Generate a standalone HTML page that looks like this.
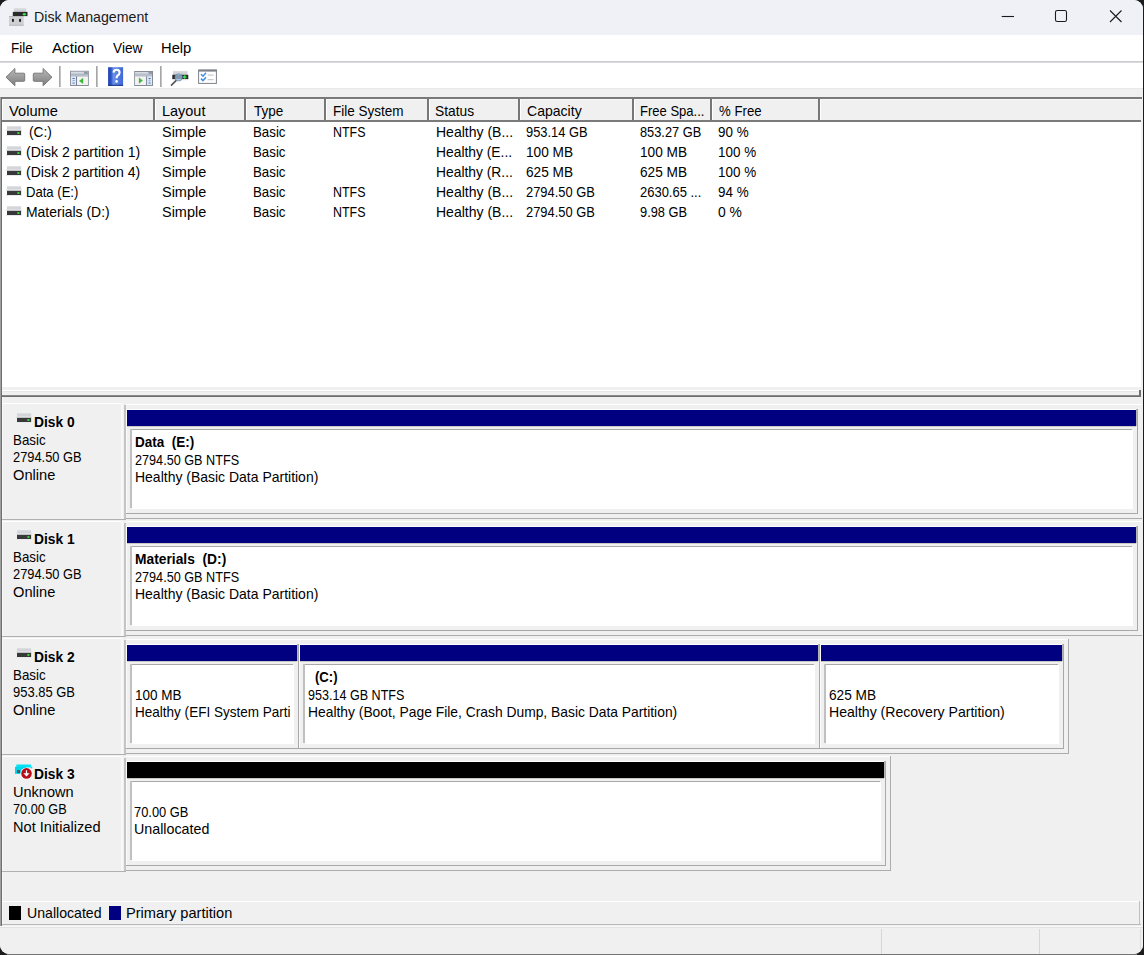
<!DOCTYPE html>
<html><head><meta charset="utf-8"><title>Disk Management</title>
<style>
html,body{margin:0;padding:0;}
body{width:1144px;height:955px;background:#1c1c1c;overflow:hidden;position:relative;font-family:"Liberation Sans",sans-serif;}
#win{position:absolute;left:0;top:0;width:1143px;height:954px;border-radius:9px;overflow:hidden;background:#f0f0f0;}
#win div, #win svg{position:absolute;}
.t{position:absolute;font-size:15px;line-height:20px;white-space:pre;transform-origin:0 15px;}
</style></head><body><div id="win">
<div style="left:0px;top:0px;width:1143px;height:35px;background:#eff1f6;"></div><div style="left:0px;top:35px;width:1143px;height:26px;background:#fff;"></div><div style="left:0px;top:62px;width:1143px;height:26px;background:#fff;"></div><div style="left:0px;top:88px;width:1143px;height:9px;background:#f0f0f0;"></div><div style="left:0px;top:88px;width:1143px;height:1px;background:#e8e8e8;"></div><div style="left:0px;top:61px;width:1143px;height:1px;background:#cbcbcb;"></div><div style="left:0px;top:62px;width:1143px;height:1px;background:#dadce2;"></div><div style="left:59px;top:66px;width:1px;height:21px;background:#a6a6a6;"></div><div style="left:60px;top:66px;width:1px;height:21px;background:#c4c4c4;"></div><div style="left:96px;top:66px;width:1px;height:21px;background:#a6a6a6;"></div><div style="left:97px;top:66px;width:1px;height:21px;background:#c4c4c4;"></div><div style="left:160px;top:66px;width:1px;height:21px;background:#a6a6a6;"></div><div style="left:161px;top:66px;width:1px;height:21px;background:#c4c4c4;"></div><div style="left:0px;top:97px;width:1143px;height:300px;background:#f0f0f0;"></div><div style="left:0px;top:97px;width:1142px;height:2px;background:#7a7a7a;"></div><div style="left:0px;top:97px;width:1px;height:829px;background:#a0a0a0;"></div><div style="left:1px;top:97px;width:1px;height:829px;background:#6e6e6e;"></div><div style="left:2px;top:99px;width:1139px;height:21px;background:#f0f0f0;"></div><div style="left:2px;top:99px;width:1139px;height:1px;background:#f8f8f8;"></div><div style="left:2px;top:120px;width:1139px;height:2px;background:#7a7a7a;"></div><div style="left:153px;top:99px;width:2px;height:21px;background:#777;"></div><div style="left:155px;top:100px;width:1px;height:20px;background:#fff;"></div><div style="left:244px;top:99px;width:2px;height:21px;background:#777;"></div><div style="left:246px;top:100px;width:1px;height:20px;background:#fff;"></div><div style="left:324px;top:99px;width:2px;height:21px;background:#777;"></div><div style="left:326px;top:100px;width:1px;height:20px;background:#fff;"></div><div style="left:427px;top:99px;width:2px;height:21px;background:#777;"></div><div style="left:429px;top:100px;width:1px;height:20px;background:#fff;"></div><div style="left:518px;top:99px;width:2px;height:21px;background:#777;"></div><div style="left:520px;top:100px;width:1px;height:20px;background:#fff;"></div><div style="left:632px;top:99px;width:2px;height:21px;background:#777;"></div><div style="left:634px;top:100px;width:1px;height:20px;background:#fff;"></div><div style="left:710px;top:99px;width:2px;height:21px;background:#777;"></div><div style="left:712px;top:100px;width:1px;height:20px;background:#fff;"></div><div style="left:818px;top:99px;width:2px;height:21px;background:#777;"></div><div style="left:820px;top:100px;width:1px;height:20px;background:#fff;"></div><div style="left:2px;top:100px;width:1px;height:20px;background:#fff;"></div><div style="left:2px;top:122px;width:1139px;height:265px;background:#fff;"></div><div style="left:2px;top:387px;width:1139px;height:8px;background:#f0f0f0;"></div><div style="left:2px;top:390px;width:1137px;height:1px;background:#ffffff;"></div><div style="left:3px;top:391px;width:1136px;height:1px;background:#e6e6e6;"></div><div style="left:2px;top:395px;width:1139px;height:1px;background:#8a8a8a;"></div><div style="left:2px;top:396px;width:1139px;height:1px;background:#6c6c6c;"></div><div style="left:3px;top:397px;width:1138px;height:1px;background:#f6f6f6;"></div><div style="left:1139px;top:390px;width:2px;height:7px;background:#6f6f6f;"></div><div style="left:2px;top:397px;width:1139px;height:528px;background:#f0f0f0;"></div><div style="left:2px;top:397px;width:1px;height:528px;background:#f8f8f8;"></div><div style="left:3px;top:403px;width:120px;height:1px;background:#fff;"></div><div style="left:121px;top:403px;width:2px;height:116px;background:#f8f8f8;"></div><div style="left:124px;top:405px;width:2px;height:114px;background:#c4c4c4;"></div><div style="left:2px;top:519px;width:124px;height:1px;background:#b0b0b0;"></div><div style="left:126px;top:404px;width:1016px;height:1px;background:#fff;"></div><div style="left:126px;top:518px;width:1016px;height:1px;background:#acacac;"></div><div style="left:126px;top:409px;width:1011px;height:1px;background:#fff;"></div><div style="left:126px;top:409px;width:1px;height:104px;background:#fbfbfb;"></div><div style="left:127px;top:410px;width:1009px;height:16px;background:#000080;"></div><div style="left:1137px;top:409px;width:1px;height:105px;background:#a8a8a8;"></div><div style="left:1136px;top:409px;width:1px;height:17px;background:#b4b4b4;"></div><div style="left:126px;top:513px;width:1012px;height:1px;background:#a8a8a8;"></div><div style="left:127px;top:426px;width:1009px;height:1px;background:#c8c8c0;"></div><div style="left:132px;top:430px;width:1001px;height:79px;background:#fff;"></div><div style="left:130px;top:429px;width:1002px;height:1px;background:#a8a8a8;"></div><div style="left:130px;top:429px;width:2px;height:79px;background:#c0c0c0;"></div><div style="left:3px;top:521px;width:120px;height:1px;background:#fff;"></div><div style="left:121px;top:521px;width:2px;height:115px;background:#f8f8f8;"></div><div style="left:124px;top:523px;width:2px;height:113px;background:#c4c4c4;"></div><div style="left:2px;top:636px;width:124px;height:1px;background:#b0b0b0;"></div><div style="left:126px;top:521px;width:1016px;height:1px;background:#fff;"></div><div style="left:126px;top:635px;width:1016px;height:1px;background:#acacac;"></div><div style="left:126px;top:526px;width:1011px;height:1px;background:#fff;"></div><div style="left:126px;top:526px;width:1px;height:104px;background:#fbfbfb;"></div><div style="left:127px;top:527px;width:1009px;height:16px;background:#000080;"></div><div style="left:1137px;top:526px;width:1px;height:105px;background:#a8a8a8;"></div><div style="left:1136px;top:526px;width:1px;height:17px;background:#b4b4b4;"></div><div style="left:126px;top:630px;width:1012px;height:1px;background:#a8a8a8;"></div><div style="left:127px;top:543px;width:1009px;height:1px;background:#c8c8c0;"></div><div style="left:132px;top:547px;width:1001px;height:79px;background:#fff;"></div><div style="left:130px;top:546px;width:1002px;height:1px;background:#a8a8a8;"></div><div style="left:130px;top:546px;width:2px;height:79px;background:#c0c0c0;"></div><div style="left:3px;top:638px;width:120px;height:1px;background:#fff;"></div><div style="left:121px;top:638px;width:2px;height:116px;background:#f8f8f8;"></div><div style="left:124px;top:640px;width:2px;height:114px;background:#c4c4c4;"></div><div style="left:2px;top:754px;width:124px;height:1px;background:#b0b0b0;"></div><div style="left:126px;top:639px;width:943px;height:1px;background:#fff;"></div><div style="left:1068px;top:639px;width:1px;height:115px;background:#acacac;"></div><div style="left:126px;top:753px;width:943px;height:1px;background:#acacac;"></div><div style="left:126px;top:644px;width:172px;height:1px;background:#fff;"></div><div style="left:126px;top:644px;width:1px;height:104px;background:#fbfbfb;"></div><div style="left:127px;top:645px;width:170px;height:16px;background:#000080;"></div><div style="left:298px;top:644px;width:1px;height:105px;background:#a8a8a8;"></div><div style="left:297px;top:644px;width:1px;height:17px;background:#b4b4b4;"></div><div style="left:126px;top:748px;width:173px;height:1px;background:#a8a8a8;"></div><div style="left:127px;top:661px;width:170px;height:1px;background:#c8c8c0;"></div><div style="left:132px;top:665px;width:162px;height:79px;background:#fff;"></div><div style="left:130px;top:664px;width:163px;height:1px;background:#a8a8a8;"></div><div style="left:130px;top:664px;width:2px;height:79px;background:#c0c0c0;"></div><div style="left:299px;top:644px;width:520px;height:1px;background:#fff;"></div><div style="left:299px;top:644px;width:1px;height:104px;background:#fbfbfb;"></div><div style="left:300px;top:645px;width:518px;height:16px;background:#000080;"></div><div style="left:819px;top:644px;width:1px;height:105px;background:#a8a8a8;"></div><div style="left:818px;top:644px;width:1px;height:17px;background:#b4b4b4;"></div><div style="left:299px;top:748px;width:521px;height:1px;background:#a8a8a8;"></div><div style="left:300px;top:661px;width:518px;height:1px;background:#c8c8c0;"></div><div style="left:305px;top:665px;width:510px;height:79px;background:#fff;"></div><div style="left:303px;top:664px;width:511px;height:1px;background:#a8a8a8;"></div><div style="left:303px;top:664px;width:2px;height:79px;background:#c0c0c0;"></div><div style="left:820px;top:644px;width:243px;height:1px;background:#fff;"></div><div style="left:820px;top:644px;width:1px;height:104px;background:#fbfbfb;"></div><div style="left:821px;top:645px;width:241px;height:16px;background:#000080;"></div><div style="left:1063px;top:644px;width:1px;height:105px;background:#a8a8a8;"></div><div style="left:1062px;top:644px;width:1px;height:17px;background:#b4b4b4;"></div><div style="left:820px;top:748px;width:244px;height:1px;background:#a8a8a8;"></div><div style="left:821px;top:661px;width:241px;height:1px;background:#c8c8c0;"></div><div style="left:826px;top:665px;width:233px;height:79px;background:#fff;"></div><div style="left:824px;top:664px;width:234px;height:1px;background:#a8a8a8;"></div><div style="left:824px;top:664px;width:2px;height:79px;background:#c0c0c0;"></div><div style="left:3px;top:756px;width:120px;height:1px;background:#fff;"></div><div style="left:121px;top:756px;width:2px;height:115px;background:#f8f8f8;"></div><div style="left:124px;top:758px;width:2px;height:113px;background:#c4c4c4;"></div><div style="left:2px;top:871px;width:124px;height:1px;background:#b0b0b0;"></div><div style="left:126px;top:756px;width:765px;height:1px;background:#fff;"></div><div style="left:890px;top:756px;width:1px;height:115px;background:#acacac;"></div><div style="left:126px;top:870px;width:765px;height:1px;background:#acacac;"></div><div style="left:126px;top:761px;width:759px;height:1px;background:#fff;"></div><div style="left:126px;top:761px;width:1px;height:104px;background:#fbfbfb;"></div><div style="left:127px;top:762px;width:757px;height:16px;background:#000;"></div><div style="left:885px;top:761px;width:1px;height:105px;background:#a8a8a8;"></div><div style="left:884px;top:761px;width:1px;height:17px;background:#b4b4b4;"></div><div style="left:126px;top:865px;width:760px;height:1px;background:#a8a8a8;"></div><div style="left:127px;top:778px;width:757px;height:1px;background:#c8c8c0;"></div><div style="left:132px;top:782px;width:749px;height:79px;background:#fff;"></div><div style="left:130px;top:781px;width:750px;height:1px;background:#a8a8a8;"></div><div style="left:130px;top:781px;width:2px;height:79px;background:#c0c0c0;"></div><div style="left:2px;top:901px;width:1139px;height:1px;background:#fff;"></div><div style="left:2px;top:924px;width:1139px;height:1px;background:#b9b9b9;"></div><div style="left:1139px;top:901px;width:1px;height:24px;background:#c0c0c0;"></div><div style="left:9px;top:906px;width:12px;height:14px;background:#000;"></div><div style="left:109px;top:906px;width:12px;height:14px;background:#000080;"></div><div style="left:0px;top:926px;width:1143px;height:28px;background:#f0f0f0;"></div><div style="left:0px;top:926px;width:1143px;height:1px;background:#fafafa;"></div><div style="left:0px;top:927px;width:1143px;height:1px;background:#e2e2e2;"></div><div style="left:1140px;top:929px;width:1px;height:22px;background:#dedede;"></div><div style="left:881px;top:929px;width:1px;height:25px;background:#d6d6d6;"></div><div style="left:1039px;top:929px;width:1px;height:25px;background:#d6d6d6;"></div>
<svg style="left:6px;top:126px" width="17" height="11" viewBox="0 0 17 11"><rect x="1" y="0.3" width="14.1" height="3.5" fill="#d3d5d9"/><rect x="0" y="3.5" width="16" height="1.3" fill="#e1e3e7"/><rect x="1" y="4.8" width="14.1" height="4.2" fill="#383838"/><ellipse cx="12.4" cy="7" rx="1.3" ry="1.1" fill="#3ed83e"/><rect x="0" y="9" width="16" height="0.9" fill="#e6e8ec"/></svg><svg style="left:6px;top:146px" width="17" height="11" viewBox="0 0 17 11"><rect x="1" y="0.3" width="14.1" height="3.5" fill="#d3d5d9"/><rect x="0" y="3.5" width="16" height="1.3" fill="#e1e3e7"/><rect x="1" y="4.8" width="14.1" height="4.2" fill="#383838"/><ellipse cx="12.4" cy="7" rx="1.3" ry="1.1" fill="#3ed83e"/><rect x="0" y="9" width="16" height="0.9" fill="#e6e8ec"/></svg><svg style="left:6px;top:166px" width="17" height="11" viewBox="0 0 17 11"><rect x="1" y="0.3" width="14.1" height="3.5" fill="#d3d5d9"/><rect x="0" y="3.5" width="16" height="1.3" fill="#e1e3e7"/><rect x="1" y="4.8" width="14.1" height="4.2" fill="#383838"/><ellipse cx="12.4" cy="7" rx="1.3" ry="1.1" fill="#3ed83e"/><rect x="0" y="9" width="16" height="0.9" fill="#e6e8ec"/></svg><svg style="left:6px;top:186px" width="17" height="11" viewBox="0 0 17 11"><rect x="1" y="0.3" width="14.1" height="3.5" fill="#d3d5d9"/><rect x="0" y="3.5" width="16" height="1.3" fill="#e1e3e7"/><rect x="1" y="4.8" width="14.1" height="4.2" fill="#383838"/><ellipse cx="12.4" cy="7" rx="1.3" ry="1.1" fill="#3ed83e"/><rect x="0" y="9" width="16" height="0.9" fill="#e6e8ec"/></svg><svg style="left:6px;top:206px" width="17" height="11" viewBox="0 0 17 11"><rect x="1" y="0.3" width="14.1" height="3.5" fill="#d3d5d9"/><rect x="0" y="3.5" width="16" height="1.3" fill="#e1e3e7"/><rect x="1" y="4.8" width="14.1" height="4.2" fill="#383838"/><ellipse cx="12.4" cy="7" rx="1.3" ry="1.1" fill="#3ed83e"/><rect x="0" y="9" width="16" height="0.9" fill="#e6e8ec"/></svg><svg style="left:15.5px;top:413px" width="17" height="11" viewBox="0 0 17 11"><rect x="1" y="0.3" width="14.1" height="3.5" fill="#d3d5d9"/><rect x="0" y="3.5" width="16" height="1.3" fill="#e1e3e7"/><rect x="1" y="4.8" width="14.1" height="4.2" fill="#383838"/><ellipse cx="12.4" cy="7" rx="1.3" ry="1.1" fill="#3ed83e"/><rect x="0" y="9" width="16" height="0.9" fill="#e6e8ec"/></svg><svg style="left:15.5px;top:530px" width="17" height="11" viewBox="0 0 17 11"><rect x="1" y="0.3" width="14.1" height="3.5" fill="#d3d5d9"/><rect x="0" y="3.5" width="16" height="1.3" fill="#e1e3e7"/><rect x="1" y="4.8" width="14.1" height="4.2" fill="#383838"/><ellipse cx="12.4" cy="7" rx="1.3" ry="1.1" fill="#3ed83e"/><rect x="0" y="9" width="16" height="0.9" fill="#e6e8ec"/></svg><svg style="left:15.5px;top:648px" width="17" height="11" viewBox="0 0 17 11"><rect x="1" y="0.3" width="14.1" height="3.5" fill="#d3d5d9"/><rect x="0" y="3.5" width="16" height="1.3" fill="#e1e3e7"/><rect x="1" y="4.8" width="14.1" height="4.2" fill="#383838"/><ellipse cx="12.4" cy="7" rx="1.3" ry="1.1" fill="#3ed83e"/><rect x="0" y="9" width="16" height="0.9" fill="#e6e8ec"/></svg><svg style="left:10px;top:760px" width="30" height="24" viewBox="10 760 30 24"><rect x="16.3" y="764.5" width="14.7" height="3" fill="#00e4f8"/><rect x="15" y="766.8" width="12" height="7.1" fill="#00d4ea"/><rect x="17" y="770" width="3" height="3" fill="#555"/><circle cx="31.5" cy="767.5" r="0.9" fill="#00e4f8"/><circle cx="26.5" cy="773.4" r="6" fill="#fff"/><circle cx="26.5" cy="773.4" r="5.3" fill="#b80c1a"/><path d="M26.5 770.3 V773.8" stroke="#fff" stroke-width="1.3"/><path d="M23.4 773.2 H29.6 L26.5 776.6 Z" fill="#fff"/></svg>
<svg style="left:0;top:0" width="240" height="92" viewBox="0 0 240 92">
<defs>
<linearGradient id="ag" x1="0" y1="0" x2="0" y2="1"><stop offset="0" stop-color="#b9b9b9"/><stop offset="1" stop-color="#7d7d7d"/></linearGradient>
<linearGradient id="hb" x1="0" y1="0" x2="1" y2="0"><stop offset="0" stop-color="#1d3fae"/><stop offset="0.2" stop-color="#2b55c9"/><stop offset="0.35" stop-color="#6a90e6"/><stop offset="1" stop-color="#3d67d6"/></linearGradient>
<linearGradient id="dl" x1="0" y1="0" x2="0" y2="1"><stop offset="0" stop-color="#dcdee2"/><stop offset="1" stop-color="#c6c8cc"/></linearGradient>
</defs>
<!-- title icon -->
<rect x="13.9" y="8.1" width="12.3" height="4" fill="url(#dl)"/>
<rect x="12.8" y="11.9" width="14.7" height="4.2" fill="#2a2a2a"/>
<ellipse cx="24.3" cy="14.2" rx="1.6" ry="1.2" fill="#3ee04a"/>
<rect x="9" y="16" width="14.7" height="9.8" fill="#cfd0d4"/>
<rect x="9" y="16" width="14.7" height="1" fill="#b8b9bd"/>
<rect x="12" y="18.7" width="1.9" height="3.3" rx="0.8" fill="#1e1e1e"/>
<rect x="19.1" y="18.7" width="1.9" height="3.3" rx="0.8" fill="#1e1e1e"/>
<rect x="9" y="24.6" width="14.7" height="1.2" fill="#bdbec2"/>
<!-- back arrow -->
<path d="M6 77.2 L14.9 68.5 L14.9 73.2 L23.8 73.2 Q24.7 73.2 24.7 74.1 L24.7 80.4 Q24.7 81.3 23.8 81.3 L14.9 81.3 L14.9 85.8 Z" fill="url(#ag)" stroke="#7a7a7a" stroke-width="1"/>
<!-- forward arrow -->
<path d="M52 77.2 L43.1 68.5 L43.1 73.2 L34.2 73.2 Q33.3 73.2 33.3 74.1 L33.3 80.4 Q33.3 81.3 34.2 81.3 L43.1 81.3 L43.1 85.8 Z" fill="url(#ag)" stroke="#7a7a7a" stroke-width="1"/>
<!-- console tree icon -->
<rect x="70.6" y="71.3" width="17.7" height="14.2" fill="#edeff2" stroke="#868c96" stroke-width="1"/>
<rect x="71.1" y="71.8" width="16.7" height="2" fill="#d6dce4"/>
<rect x="84" y="71.8" width="3.8" height="2" fill="#8f98a8"/>
<rect x="71.1" y="73.8" width="16.7" height="0.8" fill="#7a8498"/>
<rect x="71.1" y="74.6" width="16.7" height="2.2" fill="#b9c0cc"/>
<rect x="71.1" y="76.8" width="5" height="8.2" fill="#e4e8ee"/>
<rect x="76.1" y="76.4" width="1" height="8.6" fill="#6a7590"/>
<rect x="77.1" y="76.8" width="10.7" height="8.2" fill="#f3f3f3"/>
<ellipse cx="73.6" cy="78.5" rx="1.5" ry="0.6" fill="#3a7ad0"/>
<ellipse cx="73.6" cy="80.6" rx="1.5" ry="0.6" fill="#8ab0e0"/>
<ellipse cx="73.6" cy="83" rx="1.5" ry="0.6" fill="#3a7ad0"/>
<path d="M79 80.9 L83.2 77.8 L83.2 84 Z" fill="#3fb83a"/>
<!-- help icon -->
<rect x="108.1" y="67.2" width="15" height="18.6" fill="url(#hb)"/>
<rect x="108.1" y="84.8" width="15" height="1" fill="#16307a"/>
<path d="M113.6 72.6 Q113.8 69.8 116.6 69.8 Q119.6 69.8 119.6 72.6 Q119.6 74.4 117.6 75.6 Q116.6 76.3 116.6 78.2" stroke="#fff" stroke-width="2.1" fill="none"/>
<circle cx="116.6" cy="81.4" r="1.3" fill="#fff"/>
<!-- action pane icon -->
<rect x="134.7" y="71.5" width="17.8" height="14" fill="#edeff2" stroke="#868c96" stroke-width="1"/>
<rect x="135.2" y="72" width="16.8" height="1.8" fill="#d6dce4"/>
<rect x="148.5" y="72" width="3.5" height="1.8" fill="#8f98a8"/>
<rect x="135.2" y="73.8" width="16.8" height="0.7" fill="#7a8498"/>
<rect x="135.2" y="74.5" width="16.8" height="2.2" fill="#b9c0cc"/>
<rect x="135.2" y="76.7" width="11" height="8.3" fill="#f3f3f3"/>
<rect x="146.2" y="76.4" width="1" height="8.6" fill="#6a7590"/>
<rect x="147.2" y="76.7" width="4.8" height="8.3" fill="#e4e8ee"/>
<path d="M138.9 77.6 L142.8 80.6 L138.9 83.8 Z" fill="#3fb83a"/>
<ellipse cx="149.6" cy="78.6" rx="1.4" ry="0.6" fill="#3a7ad0"/>
<ellipse cx="149.6" cy="80.8" rx="1.4" ry="0.6" fill="#8ab0e0"/>
<ellipse cx="149.6" cy="83" rx="1.4" ry="0.6" fill="#3a7ad0"/>
<!-- rescan icon -->
<rect x="173" y="70.9" width="14.5" height="4" fill="url(#dl)"/>
<rect x="172.3" y="74.8" width="16" height="4.4" fill="#2c2c2c"/>
<rect x="172.3" y="79.2" width="16" height="1" fill="#e0e2e6"/>
<path d="M182.8 77 h3.6 M184.6 75.2 v3.6" stroke="#3ee04a" stroke-width="1.4"/>
<circle cx="178.6" cy="77.4" r="3.6" fill="#9cc0e0" fill-opacity="0.75" stroke="#6f8fb0" stroke-width="0.8"/>
<path d="M176.3 80.4 L171 85.6" stroke="#555" stroke-width="1.6"/>
<!-- properties icon -->
<rect x="198.6" y="70.1" width="17.8" height="13.3" fill="#fff" stroke="#7e8288" stroke-width="1"/>
<rect x="198.6" y="69.6" width="18.3" height="2" fill="#7e8288"/>
<path d="M201 74.2 L203 76.2 L206 72.8" stroke="#3e8ee6" stroke-width="1.5" fill="none"/>
<path d="M201 78.6 L203 80.6 L206 77.2" stroke="#3e8ee6" stroke-width="1.5" fill="none"/>
<rect x="207.6" y="74.6" width="6" height="1" fill="#bdbdbd"/>
<rect x="207.6" y="79.2" width="6" height="1" fill="#bdbdbd"/>
<!-- caption buttons -->
<path d="M1001.5 16.5 h12.5" stroke="#1a1a1a" stroke-width="1"/>
</svg>
<svg style="left:990px;top:0" width="150" height="35" viewBox="990 0 150 35">
<path d="M1001.7 16.5 h12.3" stroke="#1b1b1b" stroke-width="1.1"/>
<rect x="1055.5" y="10.5" width="11" height="11" rx="1.8" fill="none" stroke="#1b1b1b" stroke-width="1.1"/>
<path d="M1110 10.5 L1121.5 22 M1121.5 10.5 L1110 22" stroke="#1b1b1b" stroke-width="1.1"/>
</svg>

<span class="t" style="left:33.85px;top:7px;color:#1a1a1a;transform:scale(0.9450,1.0)">Disk Management</span><span class="t" style="left:11.30px;top:38px;color:#000;transform:scale(0.9000,1.0)">File</span><span class="t" style="left:52.10px;top:38px;color:#000;transform:scale(1.0098,1.0)">Action</span><span class="t" style="left:112.80px;top:38px;color:#000;transform:scale(0.9125,1.0)">View</span><span class="t" style="left:160.72px;top:38px;color:#000;transform:scale(0.9828,1.0)">Help</span><span class="t" style="left:9.10px;top:101px;color:#000;transform:scale(0.9780,1.0)">Volume</span><span class="t" style="left:161.64px;top:101px;color:#000;transform:scale(0.9636,1.0)">Layout</span><span class="t" style="left:253.70px;top:101px;color:#000;transform:scale(0.9000,1.0)">Type</span><span class="t" style="left:332.90px;top:101px;color:#000;transform:scale(0.9013,1.0)">File System</span><span class="t" style="left:434.58px;top:101px;color:#000;transform:scale(0.9195,1.0)">Status</span><span class="t" style="left:526.56px;top:101px;color:#000;transform:scale(0.9368,1.0)">Capacity</span><span class="t" style="left:640.23px;top:101px;color:#000;transform:scale(0.8681,1.0)">Free Spa...</span><span class="t" style="left:718.62px;top:101px;color:#000;transform:scale(0.8809,1.0)">% Free</span><span class="t" style="left:29.09px;top:122px;color:#000;transform:scale(0.9130,1.0)">(C:)</span><span class="t" style="left:161.64px;top:122px;color:#000;transform:scale(0.9636,1.0)">Simple</span><span class="t" style="left:252.71px;top:122px;color:#000;transform:scale(0.8857,1.0)">Basic</span><span class="t" style="left:333.17px;top:122px;color:#000;transform:scale(0.8289,1.0)">NTFS</span><span class="t" style="left:435.67px;top:122px;color:#000;transform:scale(0.9338,1.0)">Healthy (B...</span><span class="t" style="left:526.14px;top:122px;color:#000;transform:scale(0.8571,1.0)">953.14 GB</span><span class="t" style="left:640.25px;top:122px;color:#000;transform:scale(0.8529,1.0)">853.27 GB</span><span class="t" style="left:718.31px;top:122px;color:#000;transform:scale(0.8939,1.0)">90 %</span><span class="t" style="left:25.66px;top:142px;color:#000;transform:scale(0.9383,1.0)">(Disk 2 partition 1)</span><span class="t" style="left:161.64px;top:142px;color:#000;transform:scale(0.9636,1.0)">Simple</span><span class="t" style="left:252.71px;top:142px;color:#000;transform:scale(0.8857,1.0)">Basic</span><span class="t" style="left:435.68px;top:142px;color:#000;transform:scale(0.9225,1.0)">Healthy (E...</span><span class="t" style="left:526.09px;top:142px;color:#000;transform:scale(0.9100,1.0)">100 MB</span><span class="t" style="left:640.19px;top:142px;color:#000;transform:scale(0.9100,1.0)">100 MB</span><span class="t" style="left:718.30px;top:142px;color:#000;transform:scale(0.8951,1.0)">100 %</span><span class="t" style="left:25.66px;top:162px;color:#000;transform:scale(0.9383,1.0)">(Disk 2 partition 4)</span><span class="t" style="left:161.64px;top:162px;color:#000;transform:scale(0.9636,1.0)">Simple</span><span class="t" style="left:252.71px;top:162px;color:#000;transform:scale(0.8857,1.0)">Basic</span><span class="t" style="left:435.68px;top:162px;color:#000;transform:scale(0.9222,1.0)">Healthy (R...</span><span class="t" style="left:526.09px;top:162px;color:#000;transform:scale(0.9100,1.0)">625 MB</span><span class="t" style="left:640.19px;top:162px;color:#000;transform:scale(0.9100,1.0)">625 MB</span><span class="t" style="left:718.30px;top:162px;color:#000;transform:scale(0.8951,1.0)">100 %</span><span class="t" style="left:25.73px;top:182px;color:#000;transform:scale(0.8724,1.0)">Data (E:)</span><span class="t" style="left:161.64px;top:182px;color:#000;transform:scale(0.9636,1.0)">Simple</span><span class="t" style="left:252.71px;top:182px;color:#000;transform:scale(0.8857,1.0)">Basic</span><span class="t" style="left:333.17px;top:182px;color:#000;transform:scale(0.8289,1.0)">NTFS</span><span class="t" style="left:435.67px;top:182px;color:#000;transform:scale(0.9338,1.0)">Healthy (B...</span><span class="t" style="left:526.14px;top:182px;color:#000;transform:scale(0.8590,1.0)">2794.50 GB</span><span class="t" style="left:640.23px;top:182px;color:#000;transform:scale(0.8652,1.0)">2630.65 ...</span><span class="t" style="left:718.31px;top:182px;color:#000;transform:scale(0.8939,1.0)">94 %</span><span class="t" style="left:25.67px;top:202px;color:#000;transform:scale(0.9295,1.0)">Materials (D:)</span><span class="t" style="left:161.64px;top:202px;color:#000;transform:scale(0.9636,1.0)">Simple</span><span class="t" style="left:252.71px;top:202px;color:#000;transform:scale(0.8857,1.0)">Basic</span><span class="t" style="left:333.17px;top:202px;color:#000;transform:scale(0.8289,1.0)">NTFS</span><span class="t" style="left:435.67px;top:202px;color:#000;transform:scale(0.9338,1.0)">Healthy (B...</span><span class="t" style="left:526.14px;top:202px;color:#000;transform:scale(0.8590,1.0)">2794.50 GB</span><span class="t" style="left:640.25px;top:202px;color:#000;transform:scale(0.8547,1.0)">9.98 GB</span><span class="t" style="left:718.28px;top:202px;color:#000;transform:scale(0.9250,1.0)">0 %</span><span class="t" style="left:34.28px;top:412px;font-weight:bold;color:#000;transform:scale(0.9186,1.0)">Disk 0</span><span class="t" style="left:12.61px;top:430px;color:#000;transform:scale(0.8886,1.0)">Basic</span><span class="t" style="left:12.64px;top:447px;color:#000;transform:scale(0.8577,1.0)">2794.50 GB</span><span class="t" style="left:12.52px;top:465px;color:#000;transform:scale(0.9762,1.0)">Online</span><span class="t" style="left:34.28px;top:529px;font-weight:bold;color:#000;transform:scale(0.9186,1.0)">Disk 1</span><span class="t" style="left:12.61px;top:547px;color:#000;transform:scale(0.8886,1.0)">Basic</span><span class="t" style="left:12.64px;top:564px;color:#000;transform:scale(0.8577,1.0)">2794.50 GB</span><span class="t" style="left:12.52px;top:582px;color:#000;transform:scale(0.9762,1.0)">Online</span><span class="t" style="left:34.28px;top:647px;font-weight:bold;color:#000;transform:scale(0.9186,1.0)">Disk 2</span><span class="t" style="left:12.61px;top:665px;color:#000;transform:scale(0.8886,1.0)">Basic</span><span class="t" style="left:12.64px;top:682px;color:#000;transform:scale(0.8643,1.0)">953.85 GB</span><span class="t" style="left:12.52px;top:700px;color:#000;transform:scale(0.9762,1.0)">Online</span><span class="t" style="left:34.28px;top:764px;font-weight:bold;color:#000;transform:scale(0.9186,1.0)">Disk 3</span><span class="t" style="left:12.53px;top:782px;color:#000;transform:scale(0.9689,1.0)">Unknown</span><span class="t" style="left:12.65px;top:799px;color:#000;transform:scale(0.8468,1.0)">70.00 GB</span><span class="t" style="left:12.53px;top:817px;color:#000;transform:scale(0.9716,1.0)">Not Initialized</span><span class="t" style="left:134.70px;top:432px;font-weight:bold;color:#000;transform:scale(0.9016,1.0)">Data  (E:)</span><span class="t" style="left:134.76px;top:450px;color:#000;transform:scale(0.8434,1.0)">2794.50 GB NTFS</span><span class="t" style="left:134.67px;top:467px;color:#000;transform:scale(0.9318,1.0)">Healthy (Basic Data Partition)</span><span class="t" style="left:135.18px;top:549px;font-weight:bold;color:#000;transform:scale(0.9204,1.0)">Materials  (D:)</span><span class="t" style="left:134.76px;top:567px;color:#000;transform:scale(0.8434,1.0)">2794.50 GB NTFS</span><span class="t" style="left:134.67px;top:584px;color:#000;transform:scale(0.9318,1.0)">Healthy (Basic Data Partition)</span><span class="t" style="left:135.10px;top:685px;color:#000;transform:scale(0.9000,1.0)">100 MB</span><span class="t" style="left:135.10px;top:702px;color:#000;transform:scale(0.9018,1.0)">Healthy (EFI System Parti</span><span class="t" style="left:314.82px;top:667px;font-weight:bold;color:#000;transform:scale(0.8750,1.0)">(C:)</span><span class="t" style="left:307.86px;top:685px;color:#000;transform:scale(0.8377,1.0)">953.14 GB NTFS</span><span class="t" style="left:307.78px;top:702px;color:#000;transform:scale(0.9226,1.0)">Healthy (Boot, Page File, Crash Dump, Basic Data Partition)</span><span class="t" style="left:829.19px;top:685px;color:#000;transform:scale(0.9100,1.0)">625 MB</span><span class="t" style="left:829.16px;top:702px;color:#000;transform:scale(0.9371,1.0)">Healthy (Recovery Partition)</span><span class="t" style="left:134.44px;top:802px;color:#000;transform:scale(0.8581,1.0)">70.00 GB</span><span class="t" style="left:134.35px;top:819px;color:#000;transform:scale(0.9513,1.0)">Unallocated</span><span class="t" style="left:26.66px;top:903px;color:#000;transform:scale(0.9410,1.0)">Unallocated</span><span class="t" style="left:126.43px;top:903px;color:#000;transform:scale(0.9738,1.0)">Primary partition</span>
</div><div style="position:absolute;left:7px;top:954px;width:1130px;height:1px;background:#747474"></div></body></html>
